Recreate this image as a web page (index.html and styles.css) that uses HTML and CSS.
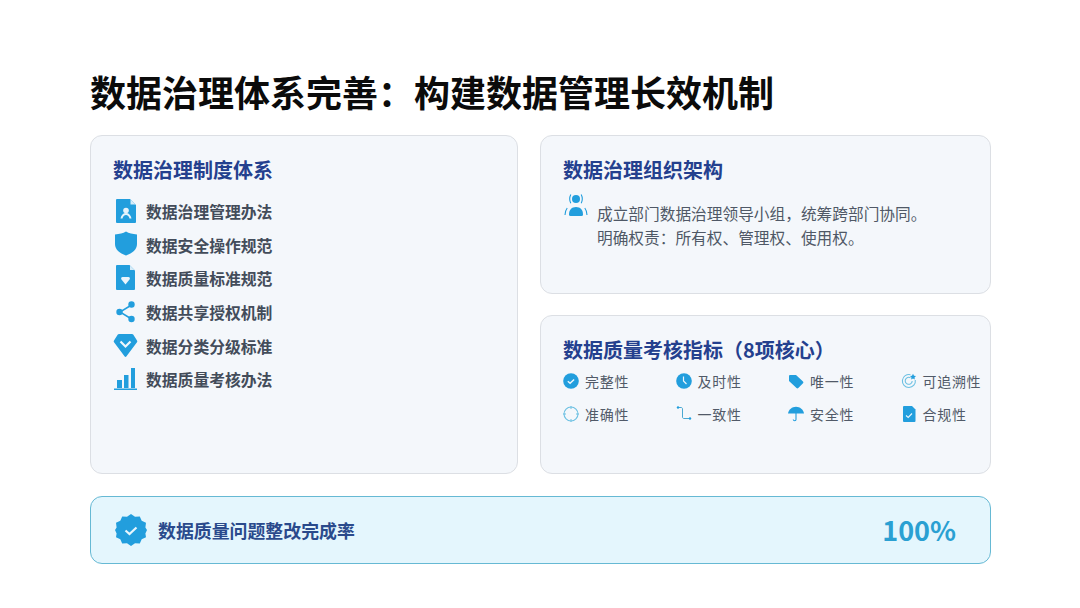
FILE: index.html
```html
<!DOCTYPE html>
<html lang="zh">
<head>
<meta charset="utf-8">
<title>数据治理体系完善</title>
<link rel="stylesheet" href="styles.css">
</head>
<body>
<main class="page">
  <h1 class="title">数据治理体系完善：构建数据管理长效机制</h1>
  <div class="grid">
    <section class="card card-left">
      <h2 class="card-title">数据治理制度体系</h2>
      <ul class="list">
        <li class="list-item">
          <svg class="list-icon" viewBox="0 0 24 24"><path fill="#229edd" d="M4 -1h13l6 6v17a1 1 0 0 1-1 1H4a1 1 0 0 1-1-1V0a1 1 0 0 1 1-1z"/><path fill="#d5ecf9" d="M17.500 -.5l5 5h-5z"/><circle cx="13" cy="10.500" r="2.800" fill="#e6f3fb"/><path fill="#e6f3fb" d="M7.500 18.500c.6-3.500 2.700-5.500 5.500-5.500s4.900 2 5.500 5.500h-2c-.5-2-1.800-3.400-3.500-3.400s-3 1.400-3.500 3.400z"/></svg>
          <span>数据治理管理办法</span>
        </li>
        <li class="list-item">
          <svg class="list-icon" viewBox="0 0 24 24"><path fill="#229edd" d="M13 -1.500c3 1.800 6.500 2.700 11 2.900v9.600c0 5.400-4.500 9.400-11 11.500C6.500 20.400 2 16.400 2 11V1.400C6.500 1.200 10 .3 13-1.500z"/></svg>
          <span>数据安全操作规范</span>
        </li>
        <li class="list-item">
          <svg class="list-icon" viewBox="0 0 24 24"><path fill="#229edd" d="M4 -2h12.500L22 3.500V22a1 1 0 0 1-1 1H4a1 1 0 0 1-1-1V-1a1 1 0 0 1 1-1z"/><path fill="#d5ecf9" d="M17 -1.500l4.500 4.500H17z"/><path fill="#eaf5fc" d="M12.500 17.500 8.500 12.500c-1-1.500 0-2.500 1-2.500h6c1 0 2 1 1 2.500z"/></svg>
          <span>数据质量标准规范</span>
        </li>
        <li class="list-item">
          <svg class="list-icon" viewBox="0 0 24 24"><path fill="none" stroke="#229edd" stroke-width="1.500" d="M18.500 4 7 11l11.500 7"/><circle cx="18.500" cy="3.500" r="3.200" fill="#229edd"/><circle cx="6.500" cy="11" r="3.200" fill="#229edd"/><circle cx="18.500" cy="18" r="3.200" fill="#229edd"/></svg>
          <span>数据共享授权机制</span>
        </li>
        <li class="list-item">
          <svg class="list-icon" viewBox="0 0 24 24"><path fill="#229edd" d="M6 0h13a1.500 1.500 0 0 1 1.200.6L24 6.500a1.500 1.500 0 0 1-.2 2L13.500 22.300a1.300 1.300 0 0 1-2 0L1.200 8.500a1.500 1.500 0 0 1-.2-2L4.800.6A1.500 1.500 0 0 1 6 0z"/><path fill="none" stroke="#eef7fc" stroke-width="2.200" d="m7.500 7.500 5 5 5-5"/></svg>
          <span>数据分类分级标准</span>
        </li>
        <li class="list-item">
          <svg class="list-icon" viewBox="0 0 24 24"><path fill="#229edd" d="M4 12h5v8H4zM11 7h4.500v13H11zM18 0h4v20h-4zM1 20.500h23V22H1z"/></svg>
          <span>数据质量考核办法</span>
        </li>
      </ul>
    </section>

    <section class="card card-org">
      <h2 class="card-title">数据治理组织架构</h2>
      <div class="org-body">
        <svg class="org-icon" viewBox="0 0 26 26"><circle cx="13" cy="6" r="4" fill="#229edd"/><path fill="none" stroke="#229edd" stroke-width="1.100" d="M7.800 1.500c-1.400 2.800-1.400 6 0 8.800M18.200 1.500c1.400 2.800 1.400 6 0 8.800"/><path fill="#229edd" d="M6 21.500c0-4.800 2.800-7.500 7-7.500s7 2.700 7 7.500a1.500 1.500 0 0 1-1.500 1.500h-11A1.500 1.500 0 0 1 6 21.500z"/><path fill="none" stroke="#229edd" stroke-width="1.100" d="M4.200 15C2.800 16.800 2.200 19 2 22M21.800 15c1.400 1.800 2 4 2.200 7"/></svg>
        <p class="org-text">成立部门数据治理领导小组，统筹跨部门协同。<br>明确权责：所有权、管理权、使用权。</p>
      </div>
    </section>

    <section class="card card-metrics">
      <h2 class="card-title">数据质量考核指标（8项核心）</h2>
      <div class="metrics">
        <div class="metric">
          <svg class="metric-icon" viewBox="0 0 16 16"><circle cx="8" cy="8" r="7.800" fill="#229edd"/><path fill="none" stroke="#eaf6fc" stroke-width="1.500" d="m4.800 8.300 2.300 2 4-3.800"/></svg>
          <span>完整性</span>
        </div>
        <div class="metric">
          <svg class="metric-icon" viewBox="0 0 16 16"><circle cx="8" cy="8" r="7.800" fill="#229edd"/><path fill="none" stroke="#eaf6fc" stroke-width="1.200" d="M7.500 3.500V8l3 3"/></svg>
          <span>及时性</span>
        </div>
        <div class="metric">
          <svg class="metric-icon" viewBox="0 0 16 16"><path fill="#229edd" d="M1 3a1 1 0 0 1 1-1h6l7 6.500a1.300 1.300 0 0 1 0 1.800L10.300 15a1.300 1.300 0 0 1-1.800 0L1 8z"/></svg>
          <span>唯一性</span>
        </div>
        <div class="metric">
          <svg class="metric-icon" viewBox="0 0 16 16"><path fill="none" stroke="#6cc0e2" stroke-width="1.100" d="M9.500 1.700A6.500 6.500 0 1 0 14.300 7M9.500 4.800A3.500 3.500 0 1 0 11.200 8"/><path fill="#229edd" d="m12 .8 1 1.900 2 .4-1.500 1.400.3 2-1.800-1-1.900 1 .4-2L9 3.100l2-.3z"/></svg>
          <span>可追溯性</span>
        </div>
        <div class="metric">
          <svg class="metric-icon" viewBox="0 0 16 16"><circle cx="8" cy="8" r="7" fill="none" stroke="#6cc0e2" stroke-width="1.100"/><path stroke="#6cc0e2" stroke-width="1" d="M8 0v3M8 13v3M0 8h3M13 8h3"/></svg>
          <span>准确性</span>
        </div>
        <div class="metric">
          <svg class="metric-icon" viewBox="0 0 16 16"><path fill="none" stroke="#4aa9d2" stroke-width="1" d="M2 1.500h3c1 0 1.500.5 1.500 1.500v8c0 1 .5 1.500 1.500 1.500h6"/><circle cx="2" cy="1.500" r="1.200" fill="#229edd"/><circle cx="14" cy="12.500" r="1.200" fill="#229edd"/></svg>
          <span>一致性</span>
        </div>
        <div class="metric">
          <svg class="metric-icon" viewBox="0 0 16 16"><path fill="#229edd" d="M8 .8c4 0 7.300 2.800 8 6.700H0C.7 3.600 4 .8 8 .8z"/><path fill="none" stroke="#229edd" stroke-width="1.100" d="M8 7v6.500c0 1.600-2.500 1.600-2.800 0"/></svg>
          <span>安全性</span>
        </div>
        <div class="metric">
          <svg class="metric-icon" viewBox="0 0 16 16"><path fill="#229edd" d="M3 0h8l3.500 3.500V15a1 1 0 0 1-1 1H3a1 1 0 0 1-1-1V1a1 1 0 0 1 1-1z"/><path fill="none" stroke="#eaf6fc" stroke-width="1.100" d="m5 9.500 2.200 2 3.800-4"/></svg>
          <span>合规性</span>
        </div>
      </div>
    </section>

    <section class="banner">
      <div class="banner-label">
        <svg class="banner-icon" viewBox="0 0 32 32"><path fill="#229edd" d="m16 0 4 2.700 4.800-.3 1.900 4.400 4.300 2-.6 4.800L32 16l-1.600 3.400.6 3.800-4.300 2-1.900 4.400-4.800-.3L16 32l-4-2.700-4.800.3-1.900-4.400-4.300-2 .6-3.800L0 16l1.600-2.400L1 8.800l4.300-2 1.900-4.400 4.800.3z"/><path fill="none" stroke="#e8f6fd" stroke-width="2.200" d="m10.500 16.500 4 3.500 7-6.500"/></svg>
        <span>数据质量问题整改完成率</span>
      </div>
      <strong class="banner-value">100%</strong>
    </section>
  </div>
</main>
</body>
</html>
```
FILE: styles.css
```css
* { box-sizing: border-box; }
html, body { margin: 0; padding: 0; }
body {
  width: 1080px;
  height: 608px;
  overflow: hidden;
  background: #fff;
  font-family: "Noto Sans CJK SC", "Noto Sans", sans-serif;
}
.page { padding: 64px 89px 0 90px; }
.title {
  margin: 0 0 17px;
  font-size: 36px;
  line-height: 54px;
  font-weight: 700;
  color: #0b0b0b;
}
.grid {
  display: grid;
  grid-template-columns: 428px 451px;
  grid-template-rows: 159px 159px 69px;
  column-gap: 22px;
  row-gap: 21px;
}
.card {
  background: #f4f7fb;
  border: 1px solid #dcdfe4;
  border-radius: 12px;
  padding: 20px 22px 0;
}
.card-left { grid-column: 1; grid-row: 1 / span 2; }
.card-org { grid-column: 2; grid-row: 1; }
.card-metrics { grid-column: 2; grid-row: 2; }
.card-title {
  margin: 0;
  font-size: 20px;
  line-height: 28px;
  font-weight: 700;
  color: #24408e;
}
.list { list-style: none; margin: 11px 0 0; padding: 0; }
.list-item {
  display: flex;
  align-items: center;
  gap: 9px;
  height: 33.6px;
  font-size: 15.800px;
  font-weight: 700;
  color: #434c5a;
}
.list-icon { width: 24px; height: 24px; flex: none; overflow: visible; }
.org-body { display: flex; align-items: flex-start; gap: 8px; margin-top: 9px; }
.org-icon { width: 26px; height: 26px; flex: none; }
.org-text {
  margin: 9px 0 0;
  font-size: 15.700px;
  line-height: 24px;
  color: #4f5866;
}
.metrics {
  display: grid;
  grid-template-columns: repeat(4, 112.500px);
  grid-auto-rows: 33.5px;
  margin-top: 0;
}
.metric {
  display: flex;
  align-items: center;
  gap: 6px;
  font-size: 14px;
  letter-spacing: .7px;
  color: #515a68;
  white-space: nowrap;
}
.metric-icon { width: 16px; height: 16px; flex: none; }
.banner {
  grid-column: 1 / span 2;
  grid-row: 3;
  margin-top: 1px;
  display: flex;
  align-items: center;
  justify-content: space-between;
  padding: 0 34px 0 24px;
  background: #e4f6fd;
  border: 1px solid #66b9d4;
  border-radius: 12px;
}
.banner-label {
  display: flex;
  align-items: center;
  gap: 11px;
  font-size: 17.900px;
  font-weight: 700;
  color: #2a4a8c;
}
.banner-icon { width: 32px; height: 32px; flex: none; }
.banner-value {
  font-size: 27px;
  line-height: 40px;
  font-weight: 700;
  color: #2aa0d2;
}
```
